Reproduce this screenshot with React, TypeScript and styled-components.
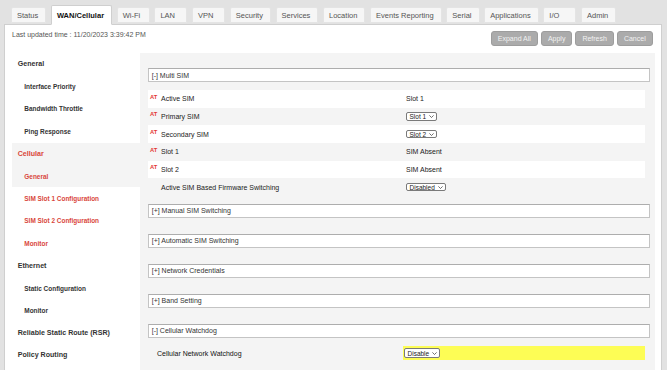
import React from "react";
import styled, { createGlobalStyle } from "styled-components";

const GlobalStyle = createGlobalStyle`
  html, body { margin: 0; padding: 0; background: #e2e2e2; }
  body { font-family: "Liberation Sans", Arial, Helvetica, sans-serif; width: 667px; height: 370px; overflow: hidden; }
  * { box-sizing: border-box; }
`;

const Page = styled.div`
  width: 667px;
  height: 370px;
  overflow: hidden;
  display: flex;
  flex-direction: column;
`;

const TabRow = styled.div`
  display: flex;
  align-items: flex-end;
  gap: 4.7px;
  height: 24px;
  padding-left: 11px;
  position: relative;
  z-index: 1;
  flex-shrink: 0;
`;

const Tab = styled.div<{ $active?: boolean }>`
  min-width: 33px;
  padding: 0 7px 0 5px;
  height: ${(p) => (p.$active ? "20px" : "16px")};
  margin-bottom: ${(p) => (p.$active ? "-1px" : "0.7px")};
  display: flex;
  align-items: center;
  font-size: 7.5px;
  white-space: nowrap;
  font-weight: ${(p) => (p.$active ? 700 : 400)};
  color: ${(p) => (p.$active ? "#111" : "#555")};
  background: ${(p) => (p.$active ? "#fff" : "#f6f6f6")};
  border: 1px solid ${(p) => (p.$active ? "#cfcfcf" : "#e4e4e4")};
  border-bottom-color: ${(p) => (p.$active ? "#fff" : "#e4e4e4")};
  border-radius: 2px 2px 0 0;
`;

const Panel = styled.div`
  flex: 1;
  min-height: 0;
  margin-left: 4px;
  width: 658px;
  background: #fff;
  border: 1px solid #cfcfcf;
  border-bottom: none;
  padding: 0 6px 0 7px;
  display: flex;
  flex-direction: column;
`;

const TopBar = styled.div`
  height: 28px;
  flex-shrink: 0;
  display: flex;
  justify-content: space-between;
  align-items: flex-start;
`;

const UpdatedText = styled.div`
  font-size: 7px;
  line-height: 9px;
  color: #555;
  padding-top: 5px;
`;

const ButtonGroup = styled.div`
  display: flex;
  gap: 3px;
  padding-top: 5.7px;
  padding-right: 2.3px;
`;

const ActionButton = styled.button`
  height: 15.3px;
  padding: 0 6px;
  font-family: inherit;
  font-size: 7px;
  color: #f2f2f2;
  background: #ababab;
  border: 1px solid #9d9d9d;
  border-radius: 3px;
`;

const Body = styled.div`
  flex: 1;
  min-height: 0;
  display: grid;
  grid-template-columns: 128px 1fr;
`;

const Sidebar = styled.div`
  background: #fff;
  display: flex;
  flex-direction: column;
  overflow: hidden;
`;

const NavItem = styled.div<{ $sub?: boolean; $active?: boolean; $shaded?: boolean }>`
  height: 22.4px;
  flex-shrink: 0;
  display: flex;
  align-items: center;
  padding-left: ${(p) => (p.$sub ? "12.3px" : "5.7px")};
  font-size: ${(p) => (p.$sub ? "6.45px" : "7.1px")};
  font-weight: 700;
  white-space: nowrap;
  color: ${(p) => (p.$active ? "#d9463a" : "#333")};
  background: ${(p) => (p.$shaded ? "#f4f4f4" : "#fff")};
`;

const Content = styled.div`
  background: #f4f4f4;
  padding: 15px 5px 0 8px;
  overflow: hidden;
  display: flex;
  flex-direction: column;
`;

const Section = styled.div`
  padding-bottom: 8px;
  display: flex;
  flex-direction: column;
  gap: 8px;
`;

const SectionHeader = styled.div`
  height: 14px;
  flex-shrink: 0;
  background: #fff;
  border: 1px solid #c4c4c4;
  border-top-color: #adadad;
  display: flex;
  align-items: center;
  padding-left: 2.7px;
  font-size: 7px;
  color: #333;
`;

const Rows = styled.div`
  margin-right: 5px;
`;

const Row = styled.div<{ $white?: boolean }>`
  height: 17.67px;
  display: grid;
  grid-template-columns: 258px 1fr;
  align-items: center;
  background: ${(p) => (p.$white ? "#fff" : "transparent")};
  font-size: 7px;
  color: #222;
`;

const LabelCell = styled.div`
  display: flex;
  align-items: center;
  padding-left: 2px;
  white-space: nowrap;
`;

const Flag = styled.span`
  width: 11px;
  align-self: flex-start;
  margin-top: -1.5px;
  font-size: 5.8px;
  font-weight: 700;
  color: #e53935;
`;

const ValueCell = styled.div`
  display: flex;
  align-items: center;
  white-space: nowrap;
`;

const SelectBox = styled.span<{ $h?: number }>`
  display: inline-flex;
  align-items: center;
  gap: 3px;
  height: ${(p) => p.$h ?? 8.6}px;
  padding: 0 2px 0 2.5px;
  background: #fff;
  border: 1px solid #7a7a7a;
  border-radius: 2px;
  font-size: 6.5px;
  color: #222;
`;

const WatchRow = styled.div`
  height: 14.5px;
  display: grid;
  grid-template-columns: 255px 1fr;
  align-items: stretch;
  margin-right: 5px;
  font-size: 7px;
  color: #111;
`;

const WatchLabel = styled.div`
  display: flex;
  align-items: center;
  padding-left: 9px;
`;

const Highlight = styled.div`
  display: flex;
  align-items: center;
  padding-left: 1px;
  background: #fdfd55;
`;

const Chevron = () => (
  <svg width="5" height="3" viewBox="0 0 5 3" fill="none">
    <path d="M0.4 0.4 L2.5 2.5 L4.6 0.4" stroke="#333" strokeWidth="0.7" />
  </svg>
);

const Select = ({ value, h }: { value: string; h?: number }) => (
  <SelectBox $h={h}>
    {value}
    <Chevron />
  </SelectBox>
);

const tabs = [
  "Status",
  "WAN/Cellular",
  "Wi-Fi",
  "LAN",
  "VPN",
  "Security",
  "Services",
  "Location",
  "Events Reporting",
  "Serial",
  "Applications",
  "I/O",
  "Admin",
];

const nav: { label: string; sub?: boolean; active?: boolean; shaded?: boolean }[] = [
  { label: "General" },
  { label: "Interface Priority", sub: true },
  { label: "Bandwidth Throttle", sub: true },
  { label: "Ping Response", sub: true },
  { label: "Cellular", active: true, shaded: true },
  { label: "General", sub: true, active: true, shaded: true },
  { label: "SIM Slot 1 Configuration", sub: true, active: true },
  { label: "SIM Slot 2 Configuration", sub: true, active: true },
  { label: "Monitor", sub: true, active: true },
  { label: "Ethernet" },
  { label: "Static Configuration", sub: true },
  { label: "Monitor", sub: true },
  { label: "Reliable Static Route (RSR)" },
  { label: "Policy Routing" },
];

const simRows: { at: boolean; label: string; value: string; select?: boolean }[] = [
  { at: true, label: "Active SIM", value: "Slot 1" },
  { at: true, label: "Primary SIM", value: "Slot 1", select: true },
  { at: true, label: "Secondary SIM", value: "Slot 2", select: true },
  { at: true, label: "Slot 1", value: "SIM Absent" },
  { at: true, label: "Slot 2", value: "SIM Absent" },
  { at: false, label: "Active SIM Based Firmware Switching", value: "Disabled", select: true },
];

const collapsed = [
  "[+] Manual SIM Switching",
  "[+] Automatic SIM Switching",
  "[+] Network Credentials",
  "[+] Band Setting",
];

export default function App() {
  return (
    <Page>
      <GlobalStyle />
      <TabRow>
        {tabs.map((t) => (
          <Tab key={t} $active={t === "WAN/Cellular"}>
            {t}
          </Tab>
        ))}
      </TabRow>
      <Panel>
        <TopBar>
          <UpdatedText>Last updated time : 11/20/2023 3:39:42 PM</UpdatedText>
          <ButtonGroup>
            <ActionButton>Expand All</ActionButton>
            <ActionButton>Apply</ActionButton>
            <ActionButton>Refresh</ActionButton>
            <ActionButton>Cancel</ActionButton>
          </ButtonGroup>
        </TopBar>
        <Body>
          <Sidebar>
            {nav.map((n, i) => (
              <NavItem key={i} $sub={n.sub} $active={n.active} $shaded={n.shaded}>
                {n.label}
              </NavItem>
            ))}
          </Sidebar>
          <Content>
            <Section>
              <SectionHeader>[-] Multi SIM</SectionHeader>
              <Rows>
                {simRows.map((r, i) => (
                  <Row key={i} $white={i % 2 === 0}>
                    <LabelCell>
                      <Flag>{r.at ? "AT" : ""}</Flag>
                      {r.label}
                    </LabelCell>
                    <ValueCell>{r.select ? <Select value={r.value} /> : r.value}</ValueCell>
                  </Row>
                ))}
              </Rows>
            </Section>
            {collapsed.map((c) => (
              <Section key={c}>
                <SectionHeader>{c}</SectionHeader>
                <div />
              </Section>
            ))}
            <Section>
              <SectionHeader>[-] Cellular Watchdog</SectionHeader>
              <WatchRow>
                <WatchLabel>Cellular Network Watchdog</WatchLabel>
                <Highlight>
                  <Select value="Disable" h={9.7} />
                </Highlight>
              </WatchRow>
            </Section>
          </Content>
        </Body>
      </Panel>
    </Page>
  );
}
